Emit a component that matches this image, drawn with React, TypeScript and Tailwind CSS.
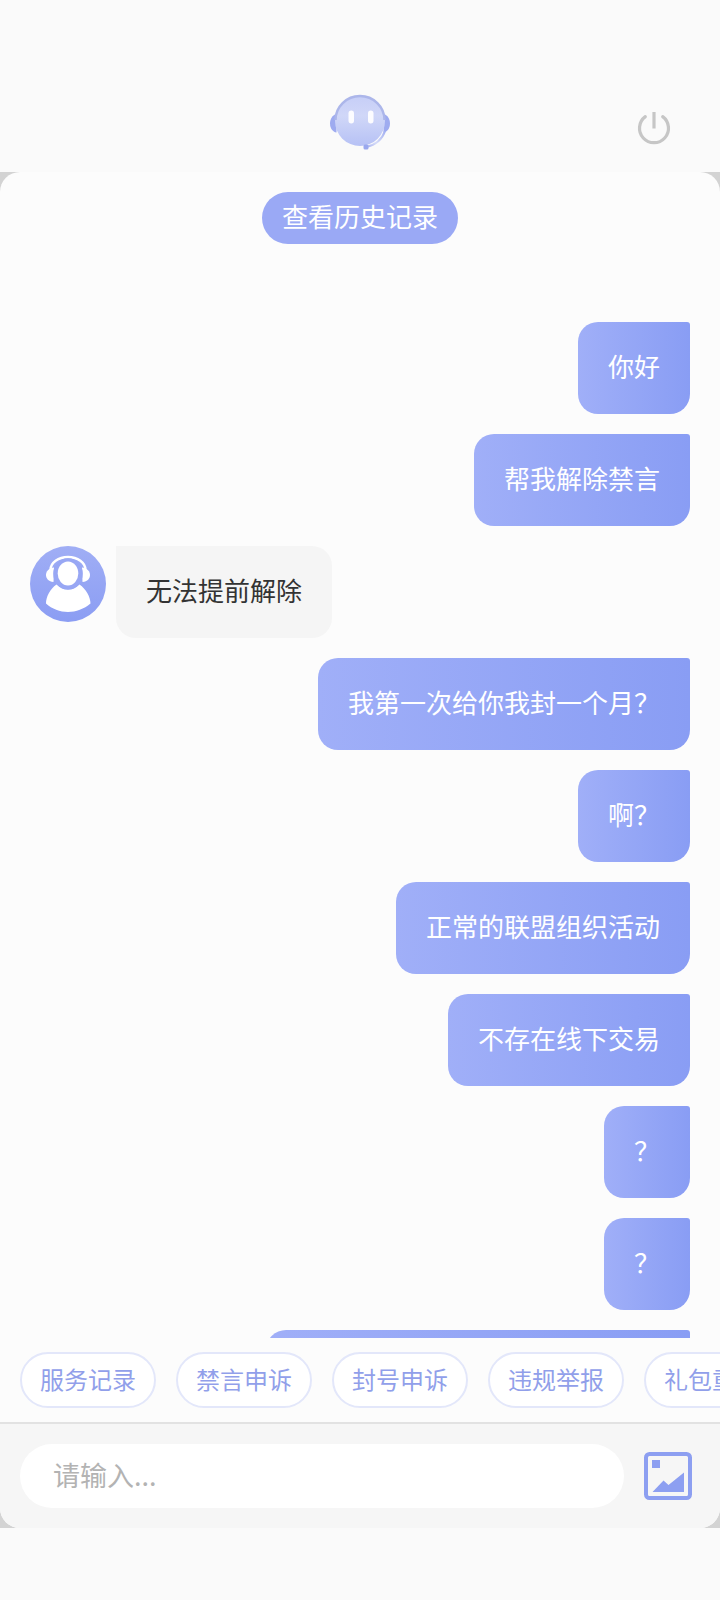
type Message = {
  id: number;
  from: 'user' | 'agent';
  text: string;
};

const MESSAGES: Message[] = [
  { id: 1, from: 'user', text: '你好' },
  { id: 2, from: 'user', text: '帮我解除禁言' },
  { id: 3, from: 'agent', text: '无法提前解除' },
  { id: 4, from: 'user', text: '我第一次给你我封一个月？' },
  { id: 5, from: 'user', text: '啊？' },
  { id: 6, from: 'user', text: '正常的联盟组织活动' },
  { id: 7, from: 'user', text: '不存在线下交易' },
  { id: 8, from: 'user', text: '？' },
  { id: 9, from: 'user', text: '？' },
];

const QUICK_ACTIONS = ['服务记录', '禁言申诉', '封号申诉', '违规举报', '礼包重发'];

function BotLogo() {
  return (
    <svg width="64" height="60" viewBox="0 0 64 60" fill="none">
      <defs>
        <linearGradient id="bot-face" x1="0" y1="0" x2="0" y2="1">
          <stop offset="0" stopColor="#c6cef7" />
          <stop offset="0.4" stopColor="#d0d7f8" />
          <stop offset="1" stopColor="#b6c1f5" />
        </linearGradient>
        <linearGradient id="bot-mic" x1="1" y1="0" x2="0" y2="1">
          <stop offset="0" stopColor="#a3b0f1" />
          <stop offset="0.6" stopColor="#d5dbf8" />
          <stop offset="1" stopColor="#a9b4f1" />
        </linearGradient>
      </defs>
      <path d="M8.500 20C4.500 21 2 25 2 29.500S4.500 38 8.500 38.500Z" fill="#9eabf0" />
      <path d="M55.500 20C59.500 21 62 25 62 29.500S59.500 38 55.500 38.500Z" fill="#9eabf0" />
      <circle cx="32" cy="27" r="25" fill="url(#bot-face)" />
      <path d="M7.500 26a24.500 24 0 0 1 49 0" stroke="#acb6ea" strokeWidth="2.500" />
      <path d="M57 37C54 46 47 51 38 53" stroke="url(#bot-mic)" strokeWidth="2.200" />
      <rect x="35.500" y="50.500" width="5" height="5" rx="1.500" fill="#9aa8ee" />
      <rect x="20.500" y="16.500" width="5.500" height="13" rx="2.750" fill="#fcfcff" />
      <rect x="40" y="16.500" width="5.500" height="13" rx="2.750" fill="#fcfcff" />
    </svg>
  );
}

function PowerIcon() {
  return (
    <svg width="34" height="34" viewBox="0 0 34 34" fill="none" stroke="#c6c6c6" strokeWidth="3.200">
      <path d="M8.300 5.600a14.500 14.500 0 1 0 17.400 0" strokeLinecap="round" />
      <path d="M17 1v16.500" />
    </svg>
  );
}

function AgentAvatar() {
  return (
    <svg className="shrink-0" width="76" height="76" viewBox="0 0 76 76">
      <defs>
        <linearGradient id="avatar-bg" x1="0" y1="0" x2="0" y2="1">
          <stop offset="0" stopColor="#a0aef5" />
          <stop offset="1" stopColor="#8b9df3" />
        </linearGradient>
      </defs>
      <circle cx="38" cy="38" r="38" fill="url(#avatar-bg)" />
      <path d="M20.500 24a17.500 13 0 0 1 35 0" fill="none" stroke="#fff" strokeWidth="2.500" />
      <path d="M24 21.500C18.500 22 16 25.500 16 29s2.500 6.500 7.500 7Z" fill="#fff" />
      <path d="M52 21.500C57.500 22 60 25.500 60 29s-2.500 6.500-7.500 7Z" fill="#fff" />
      <path
        d="M26.500 38.500C20 43 16 51 16 57.500C22 63 30 66 38 66S54 63 60.500 57.500C60.500 51 56 43 49.500 38.500C43 45.500 33 45.500 26.500 38.500Z"
        fill="#fff"
      />
      <ellipse cx="38" cy="27.700" rx="14.800" ry="15.500" fill="#98a7f4" />
      <ellipse cx="38" cy="27.500" rx="10.300" ry="12" fill="#fff" />
    </svg>
  );
}

function ImageIcon() {
  return (
    <svg className="shrink-0" width="48" height="48" viewBox="0 0 48 48" fill="#8d9ff1">
      <rect x="2" y="2" width="44" height="44" rx="3.500" fill="none" stroke="#8d9ff1" strokeWidth="4" />
      <rect x="8" y="8" width="8" height="8" />
      <path d="M8.500 40L19.500 28.500L24.500 33L40 20.500V40Z" />
    </svg>
  );
}

function MessageRow({ message }: { message: Message }) {
  if (message.from === 'agent') {
    return (
      <div className="flex items-start gap-2.5">
        <AgentAvatar />
        <div className="flex h-[92px] items-center rounded-[20px] rounded-tl-none bg-[#f5f5f5] px-[30px] pb-1 text-[26px] leading-none text-[#333]">
          {message.text}
        </div>
      </div>
    );
  }

  return (
    <div className="flex justify-end">
      <div className="flex h-[92px] items-center rounded-[20px] rounded-tr-[3px] bg-linear-to-r from-[#a0aff8] to-[#899df4] px-[30px] pb-1 text-[26px] leading-none text-white">
        {message.text}
      </div>
    </div>
  );
}

export default function App() {
  return (
    <div className="flex h-[1600px] w-[720px] flex-col overflow-hidden bg-[#fafafa] font-['Noto_Sans_CJK_SC',sans-serif]">
      <header className="grid h-[172px] shrink-0 grid-cols-3 pt-[94px]">
        <div />
        <div className="flex justify-center">
          <BotLogo />
        </div>
        <div className="flex justify-end pt-[17px] pr-[49px]">
          <PowerIcon />
        </div>
      </header>

      <div className="h-[1356px] shrink-0 bg-[#d3d3d3]">
        <main className="flex h-full flex-col overflow-hidden rounded-[20px] bg-[#fcfcfc]">
          <section className="flex h-[1166px] shrink-0 flex-col overflow-hidden px-[30px] pt-5">
            <button
              type="button"
              className="flex h-[52px] shrink-0 items-center self-center rounded-full bg-[#9aa9f5] px-5 pb-1 text-[26px] leading-none text-white"
            >
              查看历史记录
            </button>

            <div className="mt-[78px] flex flex-col gap-5">
              {MESSAGES.map((message) => (
                <MessageRow key={message.id} message={message} />
              ))}
              <div className="h-[92px] w-[424px] self-end rounded-[20px] rounded-tr-[3px] bg-linear-to-r from-[#a0aff8] to-[#899df4]" />
            </div>
          </section>

          <nav className="flex h-[84px] shrink-0 gap-5 overflow-hidden pt-3.5 pl-5">
            {QUICK_ACTIONS.map((label) => (
              <button
                key={label}
                type="button"
                className="flex h-14 w-[136px] shrink-0 items-center justify-center rounded-full border-2 border-[#e3e7fa] bg-white pb-0.5 text-[24px] leading-none whitespace-nowrap text-[#919fea]"
              >
                {label}
              </button>
            ))}
          </nav>

          <footer className="flex flex-1 items-center gap-5 border-t-2 border-[#e2e2e2] bg-[#f6f6f6] pr-7 pl-5">
            <input
              type="text"
              placeholder="请输入..."
              className="h-16 w-[604px] rounded-full bg-white px-[33px] pb-[3px] text-[27px] text-[#333] outline-none placeholder:text-[#b3b3b3]"
            />
            <ImageIcon />
          </footer>
        </main>
      </div>
    </div>
  );
}
